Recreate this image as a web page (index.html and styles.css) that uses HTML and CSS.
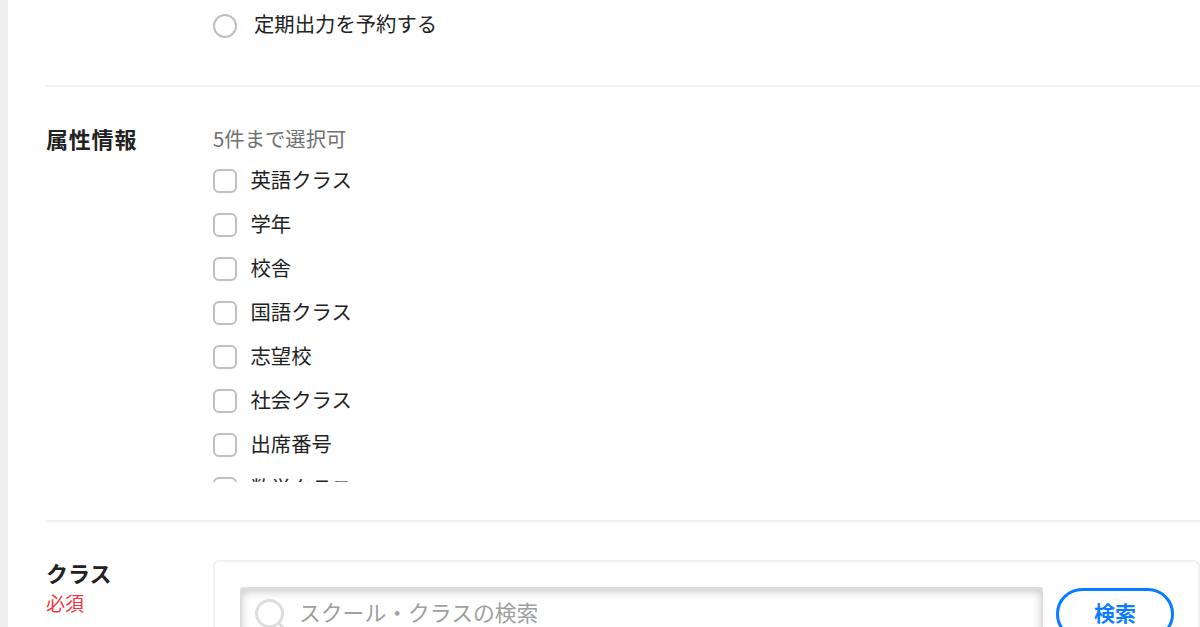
FILE: index.html
```html
<!DOCTYPE html>
<html lang="ja">
<head>
    <meta charset="UTF-8">
    <meta name="viewport" content="width=device-width, initial-scale=1.0">
    <title>出力設定</title>
    <link rel="stylesheet" href="styles.css">
</head>
<body>
    <form class="page">
        <section class="row row-schedule">
            <div class="label"></div>
            <label class="option"><input type="radio" class="radio" name="schedule"><span class="text">定期出力を予約する</span></label>
        </section>

        <section class="row row-attributes">
            <div class="label">属性情報</div>
            <div class="field">
                <p class="note">5件まで選択可</p>
                <div class="check-list">
                    <label class="check"><input type="checkbox" class="box"><span class="text">英語クラス</span></label>
                    <label class="check"><input type="checkbox" class="box"><span class="text">学年</span></label>
                    <label class="check"><input type="checkbox" class="box"><span class="text">校舎</span></label>
                    <label class="check"><input type="checkbox" class="box"><span class="text">国語クラス</span></label>
                    <label class="check"><input type="checkbox" class="box"><span class="text">志望校</span></label>
                    <label class="check"><input type="checkbox" class="box"><span class="text">社会クラス</span></label>
                    <label class="check"><input type="checkbox" class="box"><span class="text">出席番号</span></label>
                    <label class="check"><input type="checkbox" class="box"><span class="text">数学クラス</span></label>
                </div>
            </div>
        </section>

        <section class="row row-class">
            <div class="label">クラス<span class="required">必須</span></div>
            <div class="panel">
                <div class="search">
                    <svg class="search-icon" viewBox="0 0 32 32">
                        <circle cx="14.5" cy="15.5" r="13"/>
                        <path d="M23.5 25l7 7"/>
                    </svg>
                    <input type="text" class="search-input" placeholder="スクール・クラスの検索">
                </div>
                <button type="button" class="search-button">検索</button>
            </div>
        </section>
    </form>
</body>
</html>
```

FILE: styles.css
```css
* {
    box-sizing: border-box;
}

body {
    margin: 0;
    height: 627px;
    overflow: hidden;
    background: #fff;
    border-left: 8px solid #eee;
    font-family: "Noto Sans CJK JP", sans-serif;
    font-size: 20.35px;
    color: #222;
}

.page {
    height: 627px;
    padding-left: 38px;
    overflow: hidden;
}

.row {
    display: flex;
    border-bottom: 2px solid #f0f0f0;
}

.label {
    width: 167px;
    flex-shrink: 0;
    font-size: 22px;
    font-weight: bold;
    letter-spacing: 0.8px;
    line-height: 30px;
}

.row-schedule {
    height: 87px;
}

.option {
    display: flex;
    align-items: center;
    height: 51px;
}

.radio,
.box {
    appearance: none;
    width: 24px;
    height: 24px;
    margin: 0;
    border: 2px solid #bfbfbf;
    background: #fff;
}

.radio {
    margin-right: 17px;
    border-radius: 50%;
}

.box {
    margin-right: 13.5px;
    border-radius: 6px;
}

.text {
    padding-bottom: 4px;
}

.option .text {
    padding-bottom: 5px;
}

.row-attributes {
    height: 435px;
    padding-top: 36px;
}

.note {
    margin: 0 0 2px;
    line-height: 30px;
    color: #707070;
}

.check-list {
    height: 327px;
    padding-top: 4px;
    overflow: hidden;
}

.check {
    display: flex;
    align-items: center;
    height: 44px;
}

.row-class {
    padding-top: 38px;
    border-bottom: none;
}

.row-class .label {
    letter-spacing: 0;
    line-height: 25px;
}

.required {
    display: block;
    margin-top: 3px;
    font-size: 19px;
    font-weight: normal;
    line-height: 30px;
    color: #f5333a;
}

.panel {
    display: flex;
    flex: 1;
    height: 120px;
    padding: 25px 24px 0 25px;
    border: 2px solid #f0f0f0;
    border-radius: 6px;
}

.search {
    display: flex;
    align-items: center;
    width: 803px;
    height: 54px;
    padding-left: 13px;
    border: 2px solid #ddd;
    border-radius: 3px;
    box-shadow: inset 0 3px 9px #ccc;
}

.search-icon {
    width: 32px;
    height: 32px;
    fill: none;
    stroke: #ddd;
    stroke-width: 3;
}

.search-input {
    flex: 1;
    margin: 0 0 5px 12px;
    padding: 0;
    border: none;
    outline: none;
    background: none;
    font: inherit;
    font-size: 21.8px;
}

.search-input::placeholder {
    color: #a0a0a0;
}

.search-button {
    width: 118px;
    height: 52px;
    margin: 1px 0 0 13px;
    padding: 0 0 4px;
    border: 3px solid #0a7cff;
    border-radius: 26px;
    background: #fff;
    font: inherit;
    font-size: 21px;
    font-weight: bold;
    color: #0a7cff;
}
```
